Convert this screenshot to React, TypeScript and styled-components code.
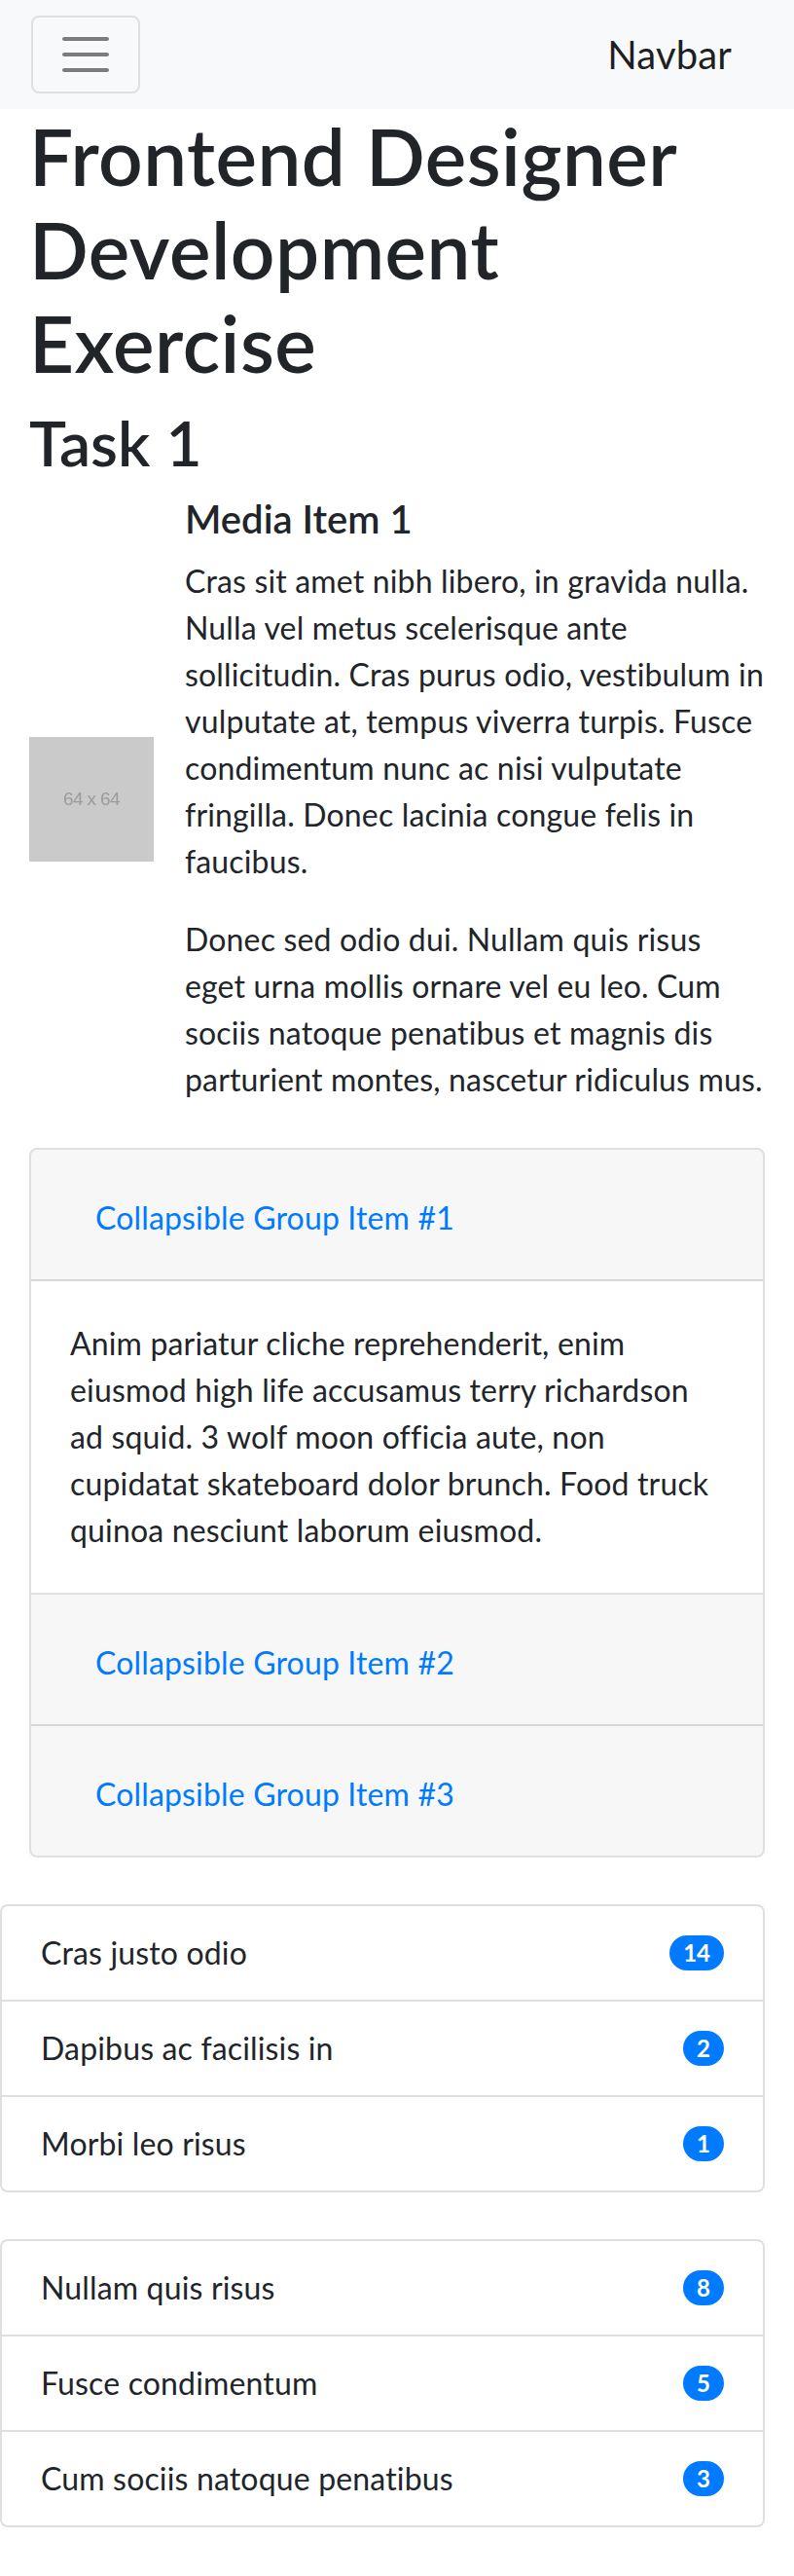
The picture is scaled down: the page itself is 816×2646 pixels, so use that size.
import React from "react";
import styled, { createGlobalStyle } from "styled-components";

const GlobalStyle = createGlobalStyle`
    body {
        margin: 0;
        background: #fff;
        color: #212529;
        font-family: Lato, "Open Sans", sans-serif;
        font-size: 32px;
        line-height: 48px;
        letter-spacing: 0.16px;
    }
    * {
        box-sizing: border-box;
    }
`;

const Navbar = styled.nav`
    display: flex;
    justify-content: space-between;
    align-items: center;
    padding: 16px 32px;
    background-color: #f8f9fa;
`;

const Toggler = styled.button`
    display: flex;
    padding: 8px 24px;
    border: 2px solid rgba(0, 0, 0, 0.1);
    border-radius: 8px;
    background: transparent;
`;

const Brand = styled.a`
    margin-right: 32px;
    padding: 10px 0;
    font-size: 40px;
    line-height: 60px;
    color: rgba(0, 0, 0, 0.9);
`;

const Container = styled.main`
    padding: 0 30px 48px;
`;

const Title = styled.h1`
    margin: 0 0 16px;
    font-size: 80px;
    font-weight: 600;
    line-height: 96px;
    letter-spacing: 0.5px;
`;

const SubTitle = styled.h2`
    margin: 0 0 16px;
    font-size: 64px;
    font-weight: 600;
    line-height: 77px;
    letter-spacing: 0;
`;

const Media = styled.section`
    display: flex;
    align-items: center;
`;

const Placeholder = styled.div`
    flex-shrink: 0;
    display: flex;
    align-items: center;
    justify-content: center;
    width: 128px;
    height: 128px;
    margin-right: 32px;
    background-color: #cacaca;
    color: #9c9c9c;
    font-family: "Liberation Sans", sans-serif;
    font-size: 19px;
    letter-spacing: -0.6px;

    span {
        filter: blur(0.6px);
    }
`;

const MediaBody = styled.div`
    flex: 1;
`;

const MediaTitle = styled.h5`
    margin: 0 0 16px;
    font-size: 40px;
    font-weight: 600;
    line-height: 48px;
    letter-spacing: 0;
`;

const Paragraph = styled.p`
    margin: 0 0 32px;

    &:last-child {
        margin-bottom: 0;
    }
`;

const Accordion = styled.div`
    margin-top: 46px;
    border: 2px solid rgba(0, 0, 0, 0.125);
    border-radius: 8px;
    overflow: hidden;
`;

const CardHeader = styled.div<{ last?: boolean }>`
    padding: 32px 40px 25px;
    background-color: rgba(0, 0, 0, 0.03);
    border-bottom: ${(p) => (p.last ? "none" : "2px solid rgba(0, 0, 0, 0.125)")};
`;

const HeaderButton = styled.button`
    padding: 12px 24px;
    border: 2px solid transparent;
    background: transparent;
    color: #007bff;
    font-family: inherit;
    font-size: 32px;
    line-height: 48px;
    letter-spacing: 0.16px;
    cursor: pointer;
`;

const CardBody = styled.div`
    padding: 40px;
    border-bottom: 2px solid rgba(0, 0, 0, 0.125);
`;

const ListGroup = styled.ul`
    margin: 48px 0 0 -30px;
    padding: 0;
    list-style: none;
    border: 2px solid rgba(0, 0, 0, 0.125);
    border-radius: 8px;
`;

const ListItem = styled.li`
    display: flex;
    justify-content: space-between;
    align-items: center;
    padding: 24px 40px;

    & + & {
        border-top: 2px solid rgba(0, 0, 0, 0.125);
    }
`;

const Badge = styled.span`
    padding: 6px 14px;
    border-radius: 320px;
    background-color: #007bff;
    color: #fff;
    font-size: 24px;
    font-weight: 700;
    line-height: 1;
    letter-spacing: 0;
`;

const HamburgerIcon = () => (
    <svg width="60" height="60" viewBox="0 0 30 30">
        <path
            d="M4 7h22M4 15h22M4 23h22"
            stroke="rgba(0, 0, 0, 0.5)"
            strokeWidth="2"
            strokeLinecap="round"
            strokeMiterlimit="10"
        />
    </svg>
);

const groups = ["Collapsible Group Item #1", "Collapsible Group Item #2", "Collapsible Group Item #3"];

const lists = [
    [
        { label: "Cras justo odio", count: 14 },
        { label: "Dapibus ac facilisis in", count: 2 },
        { label: "Morbi leo risus", count: 1 },
    ],
    [
        { label: "Nullam quis risus", count: 8 },
        { label: "Fusce condimentum", count: 5 },
        { label: "Cum sociis natoque penatibus", count: 3 },
    ],
];

const App = () => {
    return (
        <>
            <GlobalStyle />
            <Navbar>
                <Toggler aria-label="Toggle navigation">
                    <HamburgerIcon />
                </Toggler>
                <Brand>Navbar</Brand>
            </Navbar>
            <Container>
                <Title>Frontend Designer Development Exercise</Title>
                <SubTitle>Task 1</SubTitle>
                <Media>
                    <Placeholder>
                        <span>64 x 64</span>
                    </Placeholder>
                    <MediaBody>
                        <MediaTitle>Media Item 1</MediaTitle>
                        <Paragraph>
                            Cras sit amet nibh libero, in gravida nulla. Nulla vel metus scelerisque ante
                            sollicitudin. Cras purus odio, vestibulum in vulputate at, tempus viverra turpis.
                            Fusce condimentum nunc ac nisi vulputate fringilla. Donec lacinia congue felis in
                            faucibus.
                        </Paragraph>
                        <Paragraph>
                            Donec sed odio dui. Nullam quis risus eget urna mollis ornare vel eu leo. Cum
                            sociis natoque penatibus et magnis dis parturient montes, nascetur ridiculus mus.
                        </Paragraph>
                    </MediaBody>
                </Media>
                <Accordion>
                    {groups.map((g, i) => (
                        <React.Fragment key={g}>
                            <CardHeader last={i === groups.length - 1}>
                                <HeaderButton>{g}</HeaderButton>
                            </CardHeader>
                            {i === 0 && (
                                <CardBody>
                                    Anim pariatur cliche reprehenderit, enim eiusmod high life accusamus
                                    terry richardson ad squid. 3 wolf moon officia aute, non cupidatat
                                    skateboard dolor brunch. Food truck quinoa nesciunt laborum eiusmod.
                                </CardBody>
                            )}
                        </React.Fragment>
                    ))}
                </Accordion>
                {lists.map((list, i) => (
                    <ListGroup key={i}>
                        {list.map((item) => (
                            <ListItem key={item.label}>
                                {item.label}
                                <Badge>{item.count}</Badge>
                            </ListItem>
                        ))}
                    </ListGroup>
                ))}
            </Container>
        </>
    );
};

export default App;
